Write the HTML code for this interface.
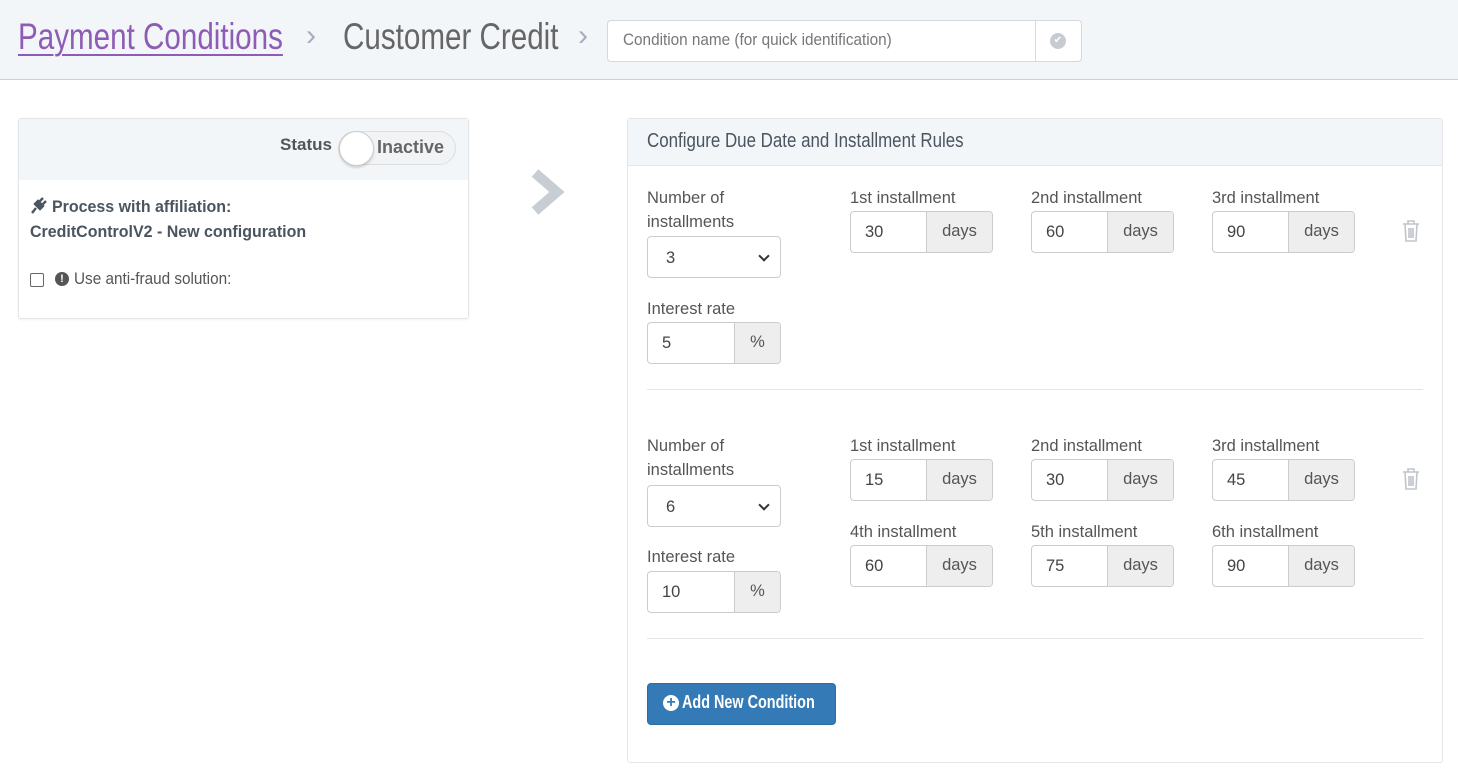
<!DOCTYPE html>
<html><head><meta charset="utf-8"><style>
*{box-sizing:border-box;margin:0;padding:0}
body{width:1458px;height:777px;background:#fff;font-family:"Liberation Sans",sans-serif;color:#555;position:relative;overflow:hidden}
.a{position:absolute;white-space:nowrap}
.c{transform-origin:0 0}
.hdr{left:0;top:0;width:1458px;height:80px;background:#f3f6f9;border-bottom:1px solid #ccd0d5}
.t{font-size:37px;top:15px;line-height:44px;transform:scaleX(0.8)}
.chev{font-size:30px;color:#aab;top:19px}
.lbl{font-size:16.5px;color:#555;line-height:24px}
.inp{border:1px solid #ccc;border-radius:4px;height:42px;background:#fff;display:flex;overflow:hidden;font-size:16.5px}
.inp .v{flex:1;padding:11px 0 0 14px;color:#444}
.inp .ad{background:#eee;border-left:1px solid #ccc;width:66px;text-align:center;padding-top:10px;color:#555}
.sel{border:1px solid #ccc;border-radius:4px;height:42px;width:134px;padding:12px 0 0 18px;font-size:16.5px;color:#444}
.sel:after{content:"";position:absolute;right:12px;top:15px;width:6px;height:6px;border-right:2px solid #333;border-bottom:2px solid #333;transform:rotate(45deg)}
.div{left:647px;width:776px;height:1px;background:#e3e5e8}
</style></head><body>
<div class="a hdr"></div>
<div class="a t c" style="left:18px;color:#8e5bb5;text-decoration:underline;text-underline-offset:5px;text-decoration-thickness:2px">Payment Conditions</div>
<div class="a chev" style="left:306px">&#x203A;</div>
<div class="a t c" style="left:343px;color:#666">Customer Credit</div>
<div class="a chev" style="left:578px">&#x203A;</div>
<div class="a" style="left:607px;top:20px;width:475px;height:42px;border:1px solid #d5d8dc;border-radius:4px;background:#fff"></div>
<div class="a c" style="left:623px;top:30px;font-size:17px;color:#777;transform:scaleX(0.9)">Condition name (for quick identification)</div>
<div class="a" style="left:1035px;top:20px;width:1px;height:42px;background:#d5d8dc"></div>
<div class="a" style="left:1050px;top:33px;width:16px;height:16px;border-radius:50%;background:#c8ccd2;color:#fff;font-size:10px;text-align:center;line-height:16px">✔</div>

<div class="a" style="left:18px;top:118px;width:451px;height:201px;border:1px solid #e3e5e8;border-radius:3px;box-shadow:0 1px 2px rgba(0,0,0,.06)"></div>
<div class="a" style="left:19px;top:119px;width:449px;height:61px;background:#f3f6f9"></div>
<div class="a" style="left:280px;top:135px;font-size:17px;font-weight:bold;color:#555">Status</div>
<div class="a" style="left:338px;top:131px;width:118px;height:34px;border:1px solid #ddd;border-radius:17px;background:#f1f3f5"></div>
<div class="a" style="left:339px;top:131px;width:35px;height:35px;border-radius:50%;background:#fff;border:1px solid #ccc;box-shadow:0 2px 2px rgba(0,0,0,.15)"></div>
<div class="a" style="left:377px;top:137px;font-size:18px;font-weight:bold;color:#666">Inactive</div>
<svg class="a" style="left:30px;top:196px" width="18" height="18" viewBox="0 0 18 18"><path d="M2 17 L6 12 M5 8 L10 13 L13 10 L8 5 Z M9 6 L13 2 M12 9 L16 5" stroke="#4a5560" stroke-width="2.4" fill="#4a5560"/></svg>
<div class="a c" style="left:52px;top:194px;font-size:17px;font-weight:bold;color:#4a5560;line-height:25px;transform:scaleX(0.94)">Process with affiliation:</div>
<div class="a c" style="left:30px;top:219px;font-size:17px;font-weight:bold;color:#4a5560;line-height:25px;transform:scaleX(0.94)">CreditControlV2 - New configuration</div>
<div class="a" style="left:30px;top:273px;width:14px;height:14px;border:1px solid #666;border-radius:2px"></div>
<div class="a" style="left:55px;top:272px;width:14px;height:14px;border-radius:50%;background:#555;color:#fff;font-size:11px;font-weight:bold;text-align:center;line-height:14px">!</div>
<div class="a c" style="left:74px;top:269px;font-size:17px;color:#555;transform:scaleX(0.9)">Use anti-fraud solution:</div>

<svg class="a" style="left:530px;top:167px" width="34" height="50" viewBox="0 0 34 50"><path d="M5 6 L27 25 L5 44" fill="none" stroke="#c8cdd3" stroke-width="10" stroke-linejoin="miter"/></svg>

<div class="a" style="left:627px;top:118px;width:816px;height:645px;border:1px solid #e3e5e8;border-radius:3px"></div>
<div class="a" style="left:628px;top:119px;width:814px;height:47px;background:#f3f6f9;border-bottom:1px solid #e3e5e8"></div>
<div class="a c" style="left:647px;top:130px;font-size:20px;color:#4a5560;transform:scaleX(0.845)">Configure Due Date and Installment Rules</div>

<div class="a lbl" style="left:647px;top:186px">Number of<br>installments</div>
<div class="a sel" style="left:647px;top:236px">3</div>
<div class="a lbl" style="left:647px;top:297px">Interest rate</div>
<div class="a inp" style="left:647px;top:322px;width:134px"><div class="v">5</div><div class="ad" style="width:46px">%</div></div>
<div class="a lbl" style="left:850px;top:186px">1st installment</div>
<div class="a inp" style="left:850px;top:211px;width:143px"><div class="v">30</div><div class="ad">days</div></div>
<div class="a lbl" style="left:1031px;top:186px">2nd installment</div>
<div class="a inp" style="left:1031px;top:211px;width:143px"><div class="v">60</div><div class="ad">days</div></div>
<div class="a lbl" style="left:1212px;top:186px">3rd installment</div>
<div class="a inp" style="left:1212px;top:211px;width:143px"><div class="v">90</div><div class="ad">days</div></div>
<svg class="a" style="left:1401px;top:219px" width="20" height="24" viewBox="0 0 20 24"><path d="M2 5h16M7 5V2h6v3M4 5l1 17h10l1-17M8 9v10M10 9v10M12 9v10" fill="none" stroke="#c0c5cb" stroke-width="1.6"/></svg>
<div class="a div" style="top:389px"></div>

<div class="a lbl" style="left:647px;top:434px">Number of<br>installments</div>
<div class="a sel" style="left:647px;top:485px">6</div>
<div class="a lbl" style="left:647px;top:545px">Interest rate</div>
<div class="a inp" style="left:647px;top:571px;width:134px"><div class="v">10</div><div class="ad" style="width:46px">%</div></div>
<div class="a lbl" style="left:850px;top:434px">1st installment</div>
<div class="a inp" style="left:850px;top:459px;width:143px"><div class="v">15</div><div class="ad">days</div></div>
<div class="a lbl" style="left:1031px;top:434px">2nd installment</div>
<div class="a inp" style="left:1031px;top:459px;width:143px"><div class="v">30</div><div class="ad">days</div></div>
<div class="a lbl" style="left:1212px;top:434px">3rd installment</div>
<div class="a inp" style="left:1212px;top:459px;width:143px"><div class="v">45</div><div class="ad">days</div></div>
<div class="a lbl" style="left:850px;top:520px">4th installment</div>
<div class="a inp" style="left:850px;top:545px;width:143px"><div class="v">60</div><div class="ad">days</div></div>
<div class="a lbl" style="left:1031px;top:520px">5th installment</div>
<div class="a inp" style="left:1031px;top:545px;width:143px"><div class="v">75</div><div class="ad">days</div></div>
<div class="a lbl" style="left:1212px;top:520px">6th installment</div>
<div class="a inp" style="left:1212px;top:545px;width:143px"><div class="v">90</div><div class="ad">days</div></div>
<svg class="a" style="left:1401px;top:467px" width="20" height="24" viewBox="0 0 20 24"><path d="M2 5h16M7 5V2h6v3M4 5l1 17h10l1-17M8 9v10M10 9v10M12 9v10" fill="none" stroke="#c0c5cb" stroke-width="1.6"/></svg>
<div class="a div" style="top:638px"></div>

<div class="a" style="left:647px;top:683px;width:189px;height:42px;background:#337ab7;border:1px solid #2e6da4;border-radius:4px"></div>
<div class="a" style="left:663px;top:695px;width:16px;height:16px;border-radius:50%;background:#fff;color:#337ab7;font-size:16px;font-weight:bold;line-height:16px;text-align:center">+</div>
<div class="a c" style="left:682px;top:692px;color:#fff;font-size:18px;font-weight:bold;transform:scaleX(0.8)">Add New Condition</div>
</body></html>
